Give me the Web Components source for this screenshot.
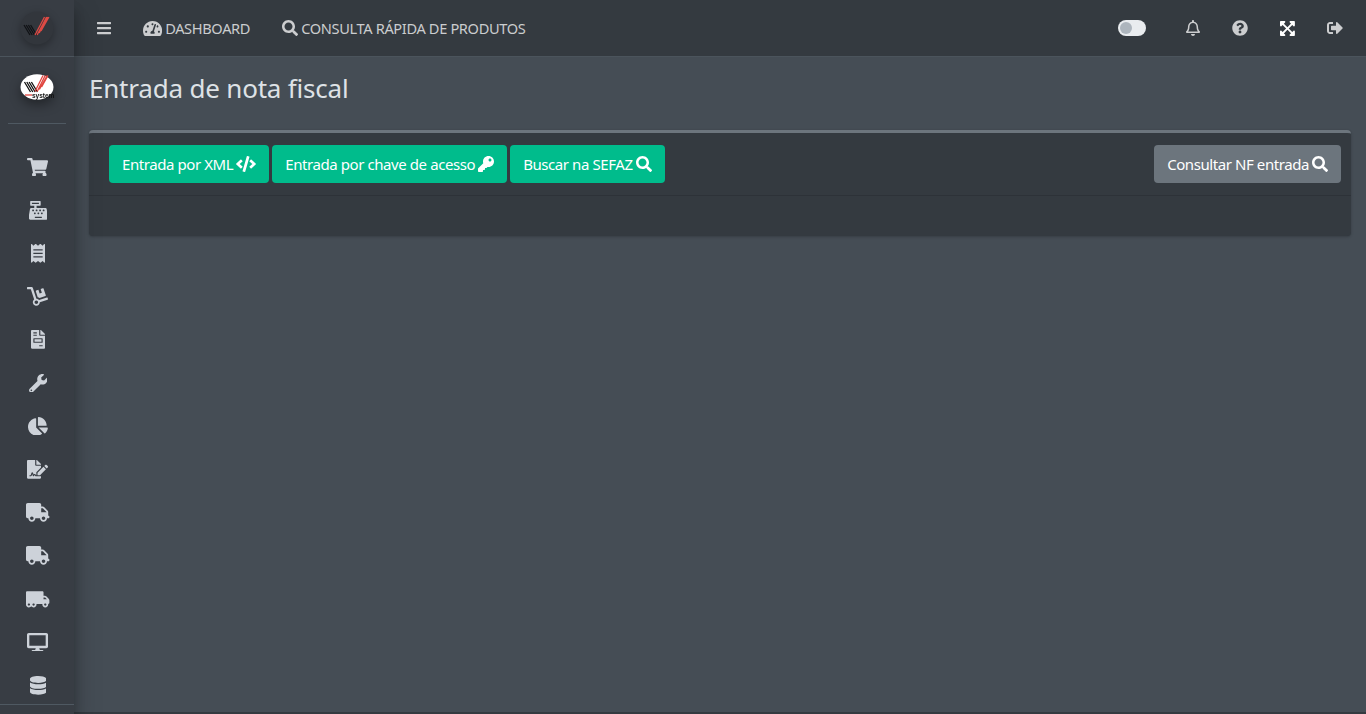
<!DOCTYPE html>
<html lang="pt-BR">
<head>
<meta charset="utf-8">
<title>Entrada de nota fiscal</title>
<style>
    html, body {
        margin: 0;
        height: 100%;
        overflow: hidden;
        background: #454d55;
        font-family: "Noto Sans", "Open Sans", sans-serif;
        font-size: 16px;
    }
</style>
</head>
<body>
<app-shell>
    <app-sidebar slot="side"></app-sidebar>
    <top-bar slot="top">
        <bar-link slot="left" icon="bars"></bar-link>
        <bar-link slot="left" icon="gauge" size="17">DASHBOARD</bar-link>
        <bar-link slot="left" icon="search">CONSULTA RÁPIDA DE PRODUTOS</bar-link>
        <theme-toggle slot="right"></theme-toggle>
        <bar-link slot="right" icon="bell"></bar-link>
        <bar-link slot="right" icon="question"></bar-link>
        <bar-link slot="right" icon="expand" size="17" bright></bar-link>
        <bar-link slot="right" icon="signout"></bar-link>
    </top-bar>
    <page-title>Entrada de nota fiscal</page-title>
    <action-card>
        <action-button slot="left" icon="code">Entrada por XML</action-button>
        <action-button slot="left" icon="key">Entrada por chave de acesso</action-button>
        <action-button slot="left" icon="search">Buscar na SEFAZ</action-button>
        <action-button slot="right" icon="search" kind="secondary">Consultar NF entrada</action-button>
    </action-card>
</app-shell>

<script>
// font awesome 5 solid shapes, [viewBox width, path]
const ICONS = {
    bars: [448, 'M16 132h416c8.837 0 16-7.163 16-16V76c0-8.837-7.163-16-16-16H16C7.163 60 0 67.163 0 76v40c0 8.837 7.163 16 16 16zm0 160h416c8.837 0 16-7.163 16-16v-40c0-8.837-7.163-16-16-16H16c-8.837 0-16 7.163-16 16v40c0 8.837 7.163 16 16 16zm0 160h416c8.837 0 16-7.163 16-16v-40c0-8.837-7.163-16-16-16H16c-8.837 0-16 7.163-16 16v40c0 8.837 7.163 16 16 16z'],
    search: [512, 'M505 442.7L405.3 343c-4.5-4.5-10.6-7-17-7H372c27.6-35.3 44-79.7 44-128C416 93.1 322.9 0 208 0S0 93.1 0 208s93.1 208 208 208c48.3 0 92.7-16.4 128-44v16.3c0 6.4 2.5 12.5 7 17l99.7 99.7c9.4 9.4 24.6 9.4 33.9 0l28.3-28.3c9.4-9.4 9.4-24.6.1-34zM208 336c-70.7 0-128-57.2-128-128 0-70.7 57.2-128 128-128 70.7 0 128 57.2 128 128 0 70.7-57.2 128-128 128z'],
    gauge: [576, 'M288 32C128.94 32 0 160.94 0 320c0 52.8 14.25 102.26 39.06 144.8 5.61 9.62 16.3 15.2 27.44 15.2h443c11.14 0 21.83-5.58 27.44-15.2C561.75 422.26 576 372.8 576 320c0-159.06-128.94-288-288-288zm0 64c14.71 0 26.58 10.13 30.32 23.65-1.11 2.26-2.64 4.23-3.45 6.67l-9.22 27.67c-5.13 3.49-10.97 6.01-17.64 6.01-17.67 0-32-14.33-32-32S270.33 96 288 96zM96 384c-17.67 0-32-14.33-32-32s14.33-32 32-32 32 14.33 32 32-14.33 32-32 32zm48-160c-17.67 0-32-14.33-32-32s14.33-32 32-32 32 14.33 32 32-14.33 32-32 32zm246.77-72.41l-61.33 184C343.13 347.33 352 364.54 352 384c0 11.72-3.38 22.55-8.88 32H232.88c-5.5-9.45-8.88-20.28-8.88-32 0-33.94 26.5-61.43 59.9-63.59l61.34-184.01c4.17-12.56 17.73-19.45 30.36-15.17 12.57 4.19 19.35 17.79 15.17 30.36zm14.66 57.2l15.52-46.55c3.47-1.29 7.13-2.23 11.05-2.23 17.67 0 32 14.33 32 32s-14.33 32-32 32c-11.38-.01-20.89-6.28-26.57-15.22zM480 384c-17.67 0-32-14.33-32-32s14.33-32 32-32 32 14.33 32 32-14.33 32-32 32z'],
    bell: [448, 'M439.39 362.29c-19.32-20.76-55.47-51.99-55.47-154.29 0-77.7-54.48-139.9-127.94-155.16V32c0-17.67-14.32-32-31.98-32s-31.98 14.33-31.98 32v20.84C118.56 68.1 64.08 130.3 64.08 208c0 102.3-36.15 133.53-55.47 154.29-6 6.45-8.66 14.16-8.61 21.71.11 16.4 12.98 32 32.1 32h383.8c19.12 0 32-15.6 32.1-32 .05-7.55-2.61-15.27-8.61-21.71zM67.53 368c21.22-27.97 44.42-74.33 44.53-159.42 0-.2-.06-.38-.06-.58 0-61.86 50.14-112 112-112s112 50.14 112 112c0 .2-.06.38-.06.58.11 85.1 23.31 131.46 44.53 159.42H67.53zM224 512c35.32 0 63.97-28.65 63.97-64H160.03c0 35.35 28.65 64 63.97 64z'],
    question: [512, 'M504 256c0 136.997-111.043 248-248 248S8 392.997 8 256C8 119.083 119.043 8 256 8s248 111.083 248 248zM262.655 90c-54.497 0-89.255 22.957-116.549 63.758-3.536 5.286-2.353 12.415 2.715 16.258l34.699 26.31c5.205 3.947 12.621 3.008 16.665-2.122 17.864-22.658 30.113-35.797 57.303-35.797 20.429 0 45.698 13.148 45.698 32.958 0 14.976-12.363 22.667-32.534 33.976C247.128 238.528 216 254.941 216 296v4c0 6.627 5.373 12 12 12h56c6.627 0 12-5.373 12-12v-1.333c0-28.462 83.186-29.647 83.186-106.667 0-58.002-60.165-102-116.531-102zM256 338c-25.365 0-46 20.635-46 46 0 25.364 20.635 46 46 46s46-20.636 46-46c0-25.365-20.635-46-46-46z'],
    expand: [448, 'M448 344v112a23.94 23.94 0 0 1-24 24H312c-21.39 0-32.09-25.9-17-41l36.2-36.2L224 295.6 116.77 402.9 153 439c15.09 15.1 4.39 41-17 41H24a23.94 23.94 0 0 1-24-24V344c0-21.4 25.89-32.1 41-17l36.19 36.2L184.46 256 77.18 148.7 41 185c-15.1 15.1-41 4.4-41-17V56a23.94 23.94 0 0 1 24-24h112c21.39 0 32.09 25.9 17 41l-36.2 36.2L224 216.4l107.23-107.3L295 73c-15.09-15.1-4.39-41 17-41h112a23.94 23.94 0 0 1 24 24v112c0 21.4-25.89 32.1-41 17l-36.19-36.2L263.54 256l107.28 107.3L407 327.1c15.1-15.2 41-4.5 41 16.9z'],
    signout: [512, 'M497 273L329 441c-15 15-41 4.5-41-17v-96H152c-13.3 0-24-10.7-24-24v-96c0-13.3 10.7-24 24-24h136V88c0-21.4 25.9-32 41-17l168 168c9.3 9.4 9.3 24.6 0 34zM192 436v-40c0-6.6-5.4-12-12-12H96c-17.7 0-32-14.3-32-32V160c0-17.7 14.3-32 32-32h84c6.6 0 12-5.4 12-12V76c0-6.6-5.4-12-12-12H96c-53 0-96 43-96 96v192c0 53 43 96 96 96h84c6.6 0 12-5.4 12-12z'],
    code: [640, 'M278.9 511.5l-61-17.7c-6.4-1.8-10-8.5-8.2-14.9L346.2 8.7c1.8-6.4 8.5-10 14.9-8.2l61 17.7c6.4 1.8 10 8.5 8.2 14.9L293.8 503.3c-1.9 6.4-8.5 10.1-14.9 8.2zm-114-112.2l43.5-46.4c4.6-4.9 4.3-12.7-.8-17.2L117 256l90.6-79.7c5.1-4.5 5.5-12.3.8-17.2l-43.5-46.4c-4.5-4.8-12.1-5.1-17-.5L3.8 247.2c-5.1 4.7-5.1 12.8 0 17.5l144.1 135.1c4.9 4.6 12.5 4.4 17-.5zm327.2.6l144.1-135.1c5.1-4.7 5.1-12.8 0-17.5L492.1 112.1c-4.8-4.5-12.4-4.3-17 .5L431.6 159c-4.6 4.9-4.3 12.7.8 17.2L523 256l-90.6 79.7c-5.1 4.5-5.5 12.3-.8 17.2l43.5 46.4c4.5 4.9 12.1 5.1 17 .6z'],
    key: [512, 'M512 176.001C512 273.203 433.202 352 336 352c-11.22 0-22.19-1.062-32.827-3.069l-24.012 27.014A23.999 23.999 0 0 1 261.223 384H224v40c0 13.255-10.745 24-24 24h-40v40c0 13.255-10.745 24-24 24H24c-13.255 0-24-10.745-24-24v-78.059c0-6.365 2.529-12.47 7.029-16.971l161.802-161.802C163.108 213.814 160 195.271 160 176 160 78.798 238.797.001 335.999 0 433.488-.001 512 78.511 512 176.001zM336 128c0 26.51 21.49 48 48 48s48-21.49 48-48-21.49-48-48-48-48 21.49-48 48z'],
    cart: [576, 'M528.12 301.319l47.273-208C578.806 78.301 567.391 64 551.99 64H159.208l-9.166-44.81C147.758 8.021 137.93 0 126.529 0H24C10.745 0 0 10.745 0 24v16c0 13.255 10.745 24 24 24h69.883l70.248 343.435C147.325 417.1 136 435.222 136 456c0 30.928 25.072 56 56 56s56-25.072 56-56c0-15.674-6.447-29.835-16.824-40h209.647C430.447 426.165 424 440.326 424 456c0 30.928 25.072 56 56 56s56-25.072 56-56c0-22.172-12.888-41.332-31.579-50.405l5.517-24.276c3.413-15.018-8.002-29.319-23.403-29.319H218.117l-6.545-32h293.145c11.206 0 20.92-7.754 23.403-18.681z'],
    register: [512, 'M511.1 378.8l-26.7-160c-2.6-15.4-15.9-26.7-31.6-26.7H208v-64h96c8.8 0 16-7.2 16-16V16c0-8.8-7.2-16-16-16H48c-8.8 0-16 7.2-16 16v96c0 8.8 7.2 16 16 16h96v64H59.1c-15.6 0-29 11.3-31.6 26.7L.8 378.7c-.6 3.5-.9 7-.9 10.5V480c0 17.7 14.3 32 32 32h448c17.7 0 32-14.3 32-32v-90.7c.1-3.5-.2-7-.8-10.5zM280 248c0-8.8 7.2-16 16-16h16c8.8 0 16 7.2 16 16v16c0 8.8-7.2 16-16 16h-16c-8.8 0-16-7.2-16-16v-16zm-32 64h16c8.8 0 16 7.2 16 16v16c0 8.8-7.2 16-16 16h-16c-8.8 0-16-7.2-16-16v-16c0-8.8 7.2-16 16-16zm-32-80c8.8 0 16 7.2 16 16v16c0 8.8-7.2 16-16 16h-16c-8.8 0-16-7.2-16-16v-16c0-8.8 7.2-16 16-16h16zM80 80V48h192v32H80zm40 200h-16c-8.8 0-16-7.2-16-16v-16c0-8.8 7.2-16 16-16h16c8.8 0 16 7.2 16 16v16c0 8.8-7.2 16-16 16zm16 64v-16c0-8.8 7.2-16 16-16h16c8.8 0 16 7.2 16 16v16c0 8.8-7.2 16-16 16h-16c-8.8 0-16-7.2-16-16zm216 112c0 4.4-3.6 8-8 8H168c-4.4 0-8-3.6-8-8v-16c0-4.4 3.6-8 8-8h176c4.4 0 8 3.6 8 8v16zm24-112c0 8.8-7.2 16-16 16h-16c-8.8 0-16-7.2-16-16v-16c0-8.8 7.2-16 16-16h16c8.8 0 16 7.2 16 16v16zm48-80c0 8.8-7.2 16-16 16h-16c-8.8 0-16-7.2-16-16v-16c0-8.8 7.2-16 16-16h16c8.8 0 16 7.2 16 16v16z'],
    receipt: [384, 'M358.4 3.2L320 48 265.6 3.2a15.9 15.9 0 0 0-19.2 0L192 48 137.6 3.2a15.9 15.9 0 0 0-19.2 0L64 48 25.6 3.2C15-4.7 0 2.8 0 16v480c0 13.2 15 20.7 25.6 12.8L64 464l54.4 44.8a15.9 15.9 0 0 0 19.2 0L192 464l54.4 44.8a15.9 15.9 0 0 0 19.2 0L320 464l38.4 44.8c10.5 7.9 25.6.4 25.6-12.8V16c0-13.2-15-20.7-25.6-12.8zM320 360c0 4.4-3.6 8-8 8H72c-4.4 0-8-3.6-8-8v-16c0-4.4 3.6-8 8-8h240c4.4 0 8 3.6 8 8v16zm0-96c0 4.4-3.6 8-8 8H72c-4.4 0-8-3.6-8-8v-16c0-4.4 3.6-8 8-8h240c4.4 0 8 3.6 8 8v16zm0-96c0 4.4-3.6 8-8 8H72c-4.4 0-8-3.6-8-8v-16c0-4.4 3.6-8 8-8h240c4.4 0 8 3.6 8 8v16z'],
    dolly: [576, 'M294.2 277.7c18 5 34.7 13.4 49.5 24.7l161.5-53.8c8.4-2.8 12.9-11.9 10.1-20.2L454.9 47.2c-2.8-8.4-11.9-12.9-20.2-10.1l-61.1 20.4 33.1 99.4L346 177l-33.1-99.4-61.6 20.5c-8.4 2.8-12.9 11.9-10.1 20.2l53 159.4zm281 48.7L565 296c-2.8-8.4-11.9-12.9-20.2-10.1l-213.5 71.2c-17.2-22-43.6-36.4-73.5-37L158.4 21.9C154 8.8 141.8 0 128 0H16C7.2 0 0 7.2 0 16v32c0 8.8 7.2 16 16 16h88.9l92.2 276.7c-26.1 20.4-41.7 53.6-36 90.5 6.1 39.4 37.9 72.3 77.3 79.2 60.2 10.7 112.3-34.8 113.4-92.6l213.3-71.2c8.3-2.8 12.9-11.8 10.1-20.2zM256 464c-26.5 0-48-21.5-48-48s21.5-48 48-48 48 21.5 48 48-21.5 48-48 48z'],
    invoice: [384, 'M288 256H96v64h192v-64zm89-151L279.1 7c-4.5-4.5-10.6-7-17-7H256v128h128v-6.1c0-6.3-2.5-12.4-7-16.9zm-153 31V0H24C10.7 0 0 10.7 0 24v464c0 13.3 10.7 24 24 24h336c13.3 0 24-10.7 24-24V160H248c-13.2 0-24-10.8-24-24zM64 72c0-4.42 3.58-8 8-8h80c4.42 0 8 3.58 8 8v16c0 4.42-3.58 8-8 8H72c-4.42 0-8-3.58-8-8V72zm0 64c0-4.42 3.58-8 8-8h80c4.42 0 8 3.58 8 8v16c0 4.42-3.58 8-8 8H72c-4.42 0-8-3.58-8-8v-16zm256 304c0 4.42-3.58 8-8 8h-80c-4.42 0-8-3.58-8-8v-16c0-4.42 3.58-8 8-8h80c4.42 0 8 3.58 8 8v16zm0-200v96c0 8.84-7.16 16-16 16H80c-8.84 0-16-7.16-16-16v-96c0-8.84 7.16-16 16-16h224c8.84 0 16 7.16 16 16z'],
    wrench: [512, 'M507.73 109.1c-2.24-9.03-13.54-12.09-20.12-5.51l-74.36 74.36-67.88-11.31-11.31-67.88 74.36-74.36c6.62-6.62 3.43-17.9-5.66-20.16-47.38-11.74-99.55.91-136.58 37.93-39.64 39.64-50.55 97.1-34.05 147.2L18.74 402.76c-24.99 24.99-24.99 65.51 0 90.5 24.99 24.99 65.51 24.99 90.5 0l213.21-213.21c50.12 16.71 107.47 5.68 147.37-34.22 37.07-37.07 49.7-89.32 37.91-136.73zM64 472c-13.25 0-24-10.75-24-24 0-13.26 10.75-24 24-24s24 10.74 24 24c0 13.25-10.75 24-24 24z'],
    pie: [544, 'M527.79 288H290.5l158.03 158.03c6.04 6.04 15.98 6.53 22.19.68 38.7-36.46 65.32-85.61 73.13-140.86 1.34-9.46-6.51-17.85-16.06-17.85zm-15.83-64.8C503.72 103.74 408.26 8.28 288.8.04 279.68-.59 272 7.1 272 16.24V240h223.77c9.14 0 16.82-7.68 16.19-16.8zM224 288V50.71c0-9.55-8.39-17.4-17.84-16.06C86.99 51.49-4.1 155.6.14 280.37 4.5 408.51 114.83 513.59 243.03 511.98c50.4-.63 96.97-16.87 135.26-44.03 7.9-5.6 8.42-17.23 1.57-24.08L224 288z'],
    signature: [576, 'M218.17 424.14c-2.95-5.92-8.09-6.52-10.17-6.52s-7.22.59-10.02 6.19l-7.67 15.34c-6.37 12.78-25.03 11.37-29.48-2.09L144 386.59l-10.61 31.88c-5.89 17.66-22.38 29.53-41 29.53H80c-8.84 0-16-7.16-16-16s7.16-16 16-16h12.39c4.83 0 9.11-3.08 10.64-7.66l18.19-54.64c3.3-9.81 12.44-16.41 22.78-16.41s19.48 6.59 22.77 16.41l13.88 41.64c19.75-16.19 54.06-9.7 66 14.16 1.89 3.78 5.49 5.95 9.36 6.26v-82.12l128-127.09V160H248c-13.2 0-24-10.8-24-24V0H24C10.7 0 0 10.7 0 24v464c0 13.3 10.7 24 24 24h336c13.3 0 24-10.7 24-24v-40l-128-.11c-16.12-.31-30.58-9.28-37.83-23.75zM384 121.9c0-6.3-2.5-12.4-7-16.9L279.1 7c-4.5-4.5-10.6-7-17-7H256v128h128v-6.1zm-96 225.06V416h68.99l161.68-162.78-67.88-67.88L288 346.96zm280.54-179.63l-31.87-31.87c-9.94-9.94-26.07-9.94-36.01 0l-27.25 27.25 67.88 67.88 27.25-27.25c9.95-9.94 9.95-26.07 0-36.01z'],
    truck: [640, 'M624 352h-16V243.9c0-12.7-5.1-24.9-14.1-33.9L494 110.1c-9-9-21.2-14.1-33.9-14.1H416V48c0-26.5-21.5-48-48-48H48C21.5 0 0 21.5 0 48v320c0 26.5 21.5 48 48 48h16c0 53 43 96 96 96s96-43 96-96h128c0 53 43 96 96 96s96-43 96-96h48c8.8 0 16-7.2 16-16v-32c0-8.8-7.2-16-16-16zM160 464c-26.5 0-48-21.5-48-48s21.5-48 48-48 48 21.5 48 48-21.5 48-48 48zm320 0c-26.5 0-48-21.5-48-48s21.5-48 48-48 48 21.5 48 48-21.5 48-48 48zm80-208H416V144h44.1l99.9 99.9V256z'],
    moving: [640, 'M621.3 237.3l-58.5-58.5c-12-12-28.3-18.7-45.3-18.7H480V64c0-17.7-14.3-32-32-32H32C14.3 32 0 46.3 0 64v336c0 44.2 35.8 80 80 80 26.3 0 49.4-12.9 64-32.4 14.6 19.6 37.7 32.4 64 32.4 44.2 0 80-35.8 80-80 0-5.5-.6-10.8-1.6-16h163.2c-1.1 5.2-1.6 10.5-1.6 16 0 44.2 35.8 80 80 80s80-35.8 80-80c0-5.5-.6-10.8-1.6-16H608c17.7 0 32-14.3 32-32V282.5c0-16.9-6.7-33.2-18.7-45.2zM80 432c-17.6 0-32-14.4-32-32s14.4-32 32-32 32 14.4 32 32-14.4 32-32 32zm128 0c-17.6 0-32-14.4-32-32s14.4-32 32-32 32 14.4 32 32-14.4 32-32 32zm272-224h37.5c4.3 0 8.3 1.7 11.3 4.7l43.3 43.3H480v-48zm48 224c-17.6 0-32-14.4-32-32s14.4-32 32-32 32 14.4 32 32-14.4 32-32 32z'],
    desktop: [576, 'M528 0H48C21.5 0 0 21.5 0 48v320c0 26.5 21.5 48 48 48h192l-16 48h-72c-13.3 0-24 10.7-24 24s10.7 24 24 24h272c13.3 0 24-10.7 24-24s-10.7-24-24-24h-72l-16-48h192c26.5 0 48-21.5 48-48V48c0-26.5-21.5-48-48-48zm-16 352H64V64h448v288z'],
    database: [448, 'M448 73.143v45.714C448 159.143 347.667 192 224 192S0 159.143 0 118.857V73.143C0 32.857 100.333 0 224 0s224 32.857 224 73.143zM448 176v102.857C448 319.143 347.667 352 224 352S0 319.143 0 278.857V176c48.125 33.143 136.208 48.572 224 48.572S399.874 209.143 448 176zm0 160v102.857C448 479.143 347.667 512 224 512S0 479.143 0 438.857V336c48.125 33.143 136.208 48.572 224 48.572S399.874 369.143 448 336z']
};

class FaIcon extends HTMLElement {
    constructor() {
        super();
        const [w, d] = ICONS[this.getAttribute('name')];
        this.attachShadow({ mode: 'open' });
        this.shadowRoot.innerHTML = `
            <style>
                :host { display: inline-flex; flex: none; }
                svg { height: 1em; width: auto; display: block; fill: currentColor; }
            </style>
            <svg viewBox="0 0 ${w} 512" aria-hidden="true"><path d="${d}"/></svg>
        `;
    }
}

class AppShell extends HTMLElement {
    constructor() {
        super();
        this.attachShadow({ mode: 'open' });
        this.shadowRoot.innerHTML = `
            <style>
                :host {
                    display: grid;
                    grid-template-columns: 74px 1fr;
                    grid-template-rows: 57px 1fr;
                    height: 714px;
                    background: #454d55;
                }
                .side { grid-row: 1 / 3; display: flex; position: relative; z-index: 2; }
                .top { display: block; position: relative; z-index: 1; }
                main {
                    padding: 0 15px;
                    border-bottom: 2px solid #343a40;
                    min-width: 0;
                }
            </style>
            <div class="side"><slot name="side"></slot></div>
            <div class="top"><slot name="top"></slot></div>
            <main><slot></slot></main>
        `;
    }
}

class AppSidebar extends HTMLElement {
    constructor() {
        super();
        const names = ['cart', 'register', 'receipt', 'dolly', 'invoice', 'wrench', 'pie', 'signature', 'truck', 'truck', 'moving', 'desktop', 'database'];
        this.attachShadow({ mode: 'open' });
        this.shadowRoot.innerHTML = `
            <style>
                :host {
                    display: flex;
                    flex-direction: column;
                    width: 74px;
                    height: 714px;
                    background: #383d44;
                    box-shadow: 0 14px 28px rgba(0,0,0,.25), 0 10px 10px rgba(0,0,0,.22);
                    color: #cdd2d9;
                }
                .brand {
                    flex: none;
                    height: 57px;
                    box-sizing: border-box;
                    display: flex;
                    align-items: center;
                    justify-content: center;
                    border-bottom: 1px solid #4b545c;
                }
                .user {
                    flex: none;
                    height: 67px;
                    margin: 0 8px;
                    box-sizing: border-box;
                    display: flex;
                    align-items: center;
                    justify-content: center;
                    border-bottom: 1px solid #4f5962;
                    padding-bottom: 6px;
                }
                nav {
                    flex: 1;
                    min-height: 0;
                    padding: 21.4px 0 0 2px;
                    font-size: 18.7px;
                }
                .item {
                    height: 43.2px;
                    display: flex;
                    align-items: center;
                    justify-content: center;
                }
                .end {
                    flex: none;
                    height: 9px;
                    border-top: 1px solid #4f5962;
                    background: #383d44;
                    position: relative;
                }
                svg { display: block; }
                .dark { filter: drop-shadow(0 3px 4px rgba(0,0,0,.3)); }
                .light { filter: drop-shadow(0 5px 6px rgba(0,0,0,.4)); }
                .tag { font: bold 6.5px "Liberation Sans", sans-serif; fill: #111; }
            </style>
            <div class="brand">
                <svg class="dark" width="34" height="34" viewBox="0 0 34 34">
                    <circle cx="17" cy="17" r="16.500" fill="#32363c"/>
                    <g fill="none" stroke-width="1.300">
                        <path stroke="#111316" d="M4 14l6 10M6.200 14l6 10M8.400 14l6 10M10.600 14l6 10"/>
                        <path stroke="#dd4a44" d="M15 24l9.500-18M17.100 24l9.500-18M19.200 22l8.400-16M21 20l7.900-14"/>
                    </g>
                </svg>
            </div>
            <div class="user">
                <svg class="light" width="34" height="26" viewBox="0 0 34 26">
                    <ellipse cx="17" cy="13" rx="16.500" ry="12.800" fill="#fff"/>
                    <g fill="none" stroke-width="1.300">
                        <path stroke="#111" d="M4.500 8l6 10M6.800 8l6 10M9.100 8l6 10M11.400 8l6 10"/>
                        <path stroke="#e0453f" d="M15 17.500L23 1.500M17.200 17.500L25.200 1.500M19.400 15.500L27.200 1.500M21.600 13L28 1.500"/>
                        <path stroke="#e0453f" d="M5 21h7"/>
                    </g>
                    <text class="tag" x="12" y="23.500">system</text>
                </svg>
            </div>
            <nav>${names.map(n => `<div class="item"><fa-icon name="${n}"></fa-icon></div>`).join('')}</nav>
            <div class="end"></div>
        `;
    }
}

class TopBar extends HTMLElement {
    constructor() {
        super();
        this.attachShadow({ mode: 'open' });
        this.shadowRoot.innerHTML = `
            <style>
                :host {
                    display: flex;
                    justify-content: space-between;
                    height: 57px;
                    box-sizing: border-box;
                    padding: 0 7px 0 7px;
                    background: #343a40;
                    border-bottom: 1px solid #4b545c;
                }
                .group { display: flex; align-items: center; }
            </style>
            <div class="group"><slot name="left"></slot></div>
            <div class="group"><slot name="right"></slot></div>
        `;
    }
}

class BarLink extends HTMLElement {
    constructor() {
        super();
        const size = this.getAttribute('size') || 16;
        this.attachShadow({ mode: 'open' });
        this.shadowRoot.innerHTML = `
            <style>
                :host {
                    display: flex;
                    align-items: center;
                    gap: 3px;
                    padding: 0 16px;
                    color: rgba(255,255,255,.75);
                    font-size: 14.6px;
                    letter-spacing: -0.35px;
                    white-space: nowrap;
                }
                :host([bright]) { color: #fff; }
                fa-icon { font-size: ${size}px; }
            </style>
            <fa-icon name="${this.getAttribute('icon')}"></fa-icon><slot></slot>
        `;
    }
}

class ThemeToggle extends HTMLElement {
    constructor() {
        super();
        this.attachShadow({ mode: 'open' });
        this.shadowRoot.innerHTML = `
            <style>
                :host {
                    display: flex;
                    align-items: center;
                    box-sizing: border-box;
                    width: 28px;
                    height: 16px;
                    margin-right: 24px;
                    padding: 2px;
                    border-radius: 8px;
                    background: #e9ecef;
                }
                span { width: 12px; height: 12px; border-radius: 50%; background: #adb5bd; }
            </style>
            <span></span>
        `;
    }
}

class PageTitle extends HTMLElement {
    constructor() {
        super();
        this.attachShadow({ mode: 'open' });
        this.shadowRoot.innerHTML = `
            <style>
                :host { display: block; padding: 14px 0 0 0; height: 58px; box-sizing: border-box; }
                h1 {
                    margin: 0;
                    font-size: 26px;
                    font-weight: 400;
                    line-height: 35px;
                    color: #dee2e6;
                    letter-spacing: -0.2px;
                }
            </style>
            <h1><slot></slot></h1>
        `;
    }
}

class ActionCard extends HTMLElement {
    constructor() {
        super();
        this.attachShadow({ mode: 'open' });
        this.shadowRoot.innerHTML = `
            <style>
                :host {
                    display: block;
                    margin-top: 15px;
                    background: #343a40;
                    border-top: 3px solid #6c757d;
                    border-radius: 4px;
                    box-shadow: 0 0 1px rgba(0,0,0,.125), 0 1px 3px rgba(0,0,0,.2);
                }
                header {
                    display: flex;
                    justify-content: space-between;
                    padding: 12px 10px 12px 20px;
                    border-bottom: 1px solid rgba(0,0,0,.125);
                }
                .group { display: flex; gap: 3px; }
                .body { height: 40px; }
            </style>
            <header>
                <div class="group"><slot name="left"></slot></div>
                <div class="group"><slot name="right"></slot></div>
            </header>
            <div class="body"></div>
        `;
    }
}

class ActionButton extends HTMLElement {
    constructor() {
        super();
        this.attachShadow({ mode: 'open' });
        this.shadowRoot.innerHTML = `
            <style>
                :host {
                    display: flex;
                    align-items: center;
                    gap: 3px;
                    height: 38px;
                    box-sizing: border-box;
                    padding: 0 13px;
                    border-radius: 4px;
                    background: #00bc8c;
                    color: #fff;
                    font-size: 15px;
                    letter-spacing: -0.42px;
                    white-space: nowrap;
                }
                :host([kind="secondary"]) { background: #6c757d; }
                fa-icon { font-size: 16px; }
            </style>
            <slot></slot><fa-icon name="${this.getAttribute('icon')}"></fa-icon>
        `;
    }
}

customElements.define('fa-icon', FaIcon);
customElements.define('app-shell', AppShell);
customElements.define('app-sidebar', AppSidebar);
customElements.define('top-bar', TopBar);
customElements.define('bar-link', BarLink);
customElements.define('theme-toggle', ThemeToggle);
customElements.define('page-title', PageTitle);
customElements.define('action-card', ActionCard);
customElements.define('action-button', ActionButton);
</script>
</body>
</html>
